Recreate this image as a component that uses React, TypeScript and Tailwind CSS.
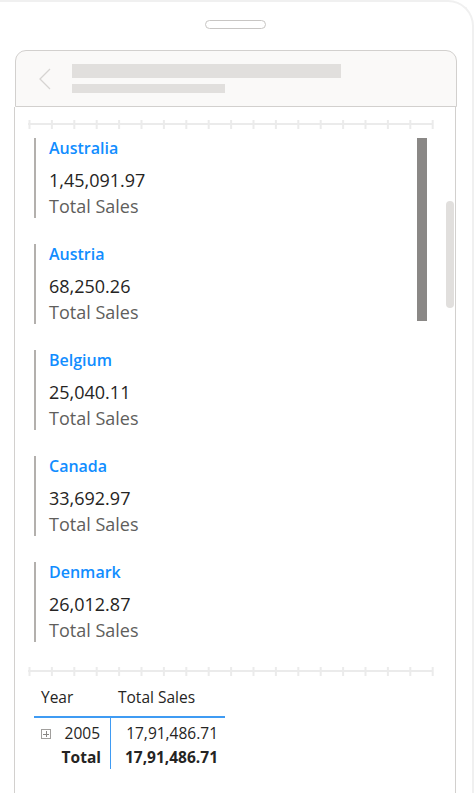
import React from "react";

const cards = [
  { name: "Australia", value: "1,45,091.97" },
  { name: "Austria", value: "68,250.26" },
  { name: "Belgium", value: "25,040.11" },
  { name: "Canada", value: "33,692.97" },
  { name: "Denmark", value: "26,012.87" },
];

function Ruler() {
  const ticks = Array.from({ length: 19 }, (_, i) => 0.5 + i * 22.4);
  return (
    <svg width="406" height="10" className="block">
      <rect x="0" y="3" width="405" height="2" fill="#ebebeb" />
      {ticks.map((x, i) => (
        <rect key={i} x={x} y="0" width="2" height="9" fill="#ebebeb" />
      ))}
    </svg>
  );
}

export default function App() {
  const font = { fontFamily: '"Open Sans", "Noto Sans", sans-serif' };
  return (
    <div className="w-[476px] h-[793px] overflow-hidden bg-white" style={font}>
      <div className="w-[474px] h-[830px] border-t-2 border-r-2 border-[#f0f0f0] rounded-tr-[26px] flex flex-col">
        <div className="mt-[18px] self-center ml-[-2px] w-[61px] h-[9px] rounded-full border border-[#c8c6c4]" />
        <div className="mt-[21px] ml-[15px] w-[442px] h-[57px] rounded-t-[11px] border border-[#d2d0ce] bg-[#faf9f8] flex items-start">
          <svg width="16" height="24" className="mt-[16px] ml-[22px]" viewBox="0 0 16 24">
            <polyline points="12,2 2,12 12,22" fill="none" stroke="#d6d4d2" strokeWidth="1.3" />
          </svg>
          <div className="ml-[18px] mt-[13px] flex flex-col gap-[6px]">
            <div className="w-[269px] h-[14px] bg-[#e1dfdd]" />
            <div className="w-[153px] h-[9px] bg-[#e1dfdd]" />
          </div>
        </div>
        <div className="relative ml-[14px] w-[442px] flex-1 border-l border-r border-[#d2d0ce] flex flex-col">
          <div className="absolute left-[431px] top-[94px] w-[8px] h-[107px] rounded-full bg-[#e1dfdd]" />
          <div className="mt-[13px] ml-[13px]">
            <Ruler />
          </div>
          <div className="flex mt-[8px]">
            <div className="ml-[19px] flex flex-col gap-[26px] w-[380px]">
              {cards.map((c) => (
                <div key={c.name} className="h-[80px] border-l-2 border-[#b3b0ad] pl-[13px] flex flex-col">
                  <div className="text-[16px] leading-[22px] font-semibold text-[#118dff] -mt-[1px]">{c.name}</div>
                  <div className="mt-[9px] text-[18px] leading-[24px] text-[#252423]">{c.value}</div>
                  <div className="mt-[2px] text-[18px] leading-[24px] text-[#605e5c]">Total Sales</div>
                </div>
              ))}
            </div>
            <div className="ml-[3px] w-[10px] h-[183px] bg-[#8a8886]" />
          </div>
          <div className="mt-[25px] ml-[13px]">
            <Ruler />
          </div>
          <div className="mt-[10px] ml-[19px] w-[191px] text-[15.5px] text-[#252423]">
            <div className="flex h-[31px] border-b-2 border-[#3f9bf3] leading-[20px]">
              <div className="w-[77px] pl-[7px]">Year</div>
              <div className="pl-[7px]">Total Sales</div>
            </div>
            <div className="flex">
              <div className="w-[77px] border-r border-[#3f9bf3] flex flex-col pt-[3px]">
                <div className="h-[26px] flex items-center pl-[7px] pr-[10px]">
                  <div className="w-[10px] h-[10px] border border-[#a19f9d] relative flex items-center justify-center">
                    <div className="absolute w-[6px] h-px bg-[#8a8886]" />
                    <div className="absolute w-px h-[6px] bg-[#8a8886]" />
                  </div>
                  <div className="ml-auto">2005</div>
                </div>
                <div className="h-[22px] flex items-center justify-end pr-[9px] font-bold">Total</div>
              </div>
              <div className="flex-1 flex flex-col items-end pr-[7px] pt-[3px]">
                <div className="h-[26px] flex items-center">17,91,486.71</div>
                <div className="h-[22px] flex items-center font-bold">17,91,486.71</div>
              </div>
            </div>
          </div>
        </div>
      </div>
    </div>
  );
}
